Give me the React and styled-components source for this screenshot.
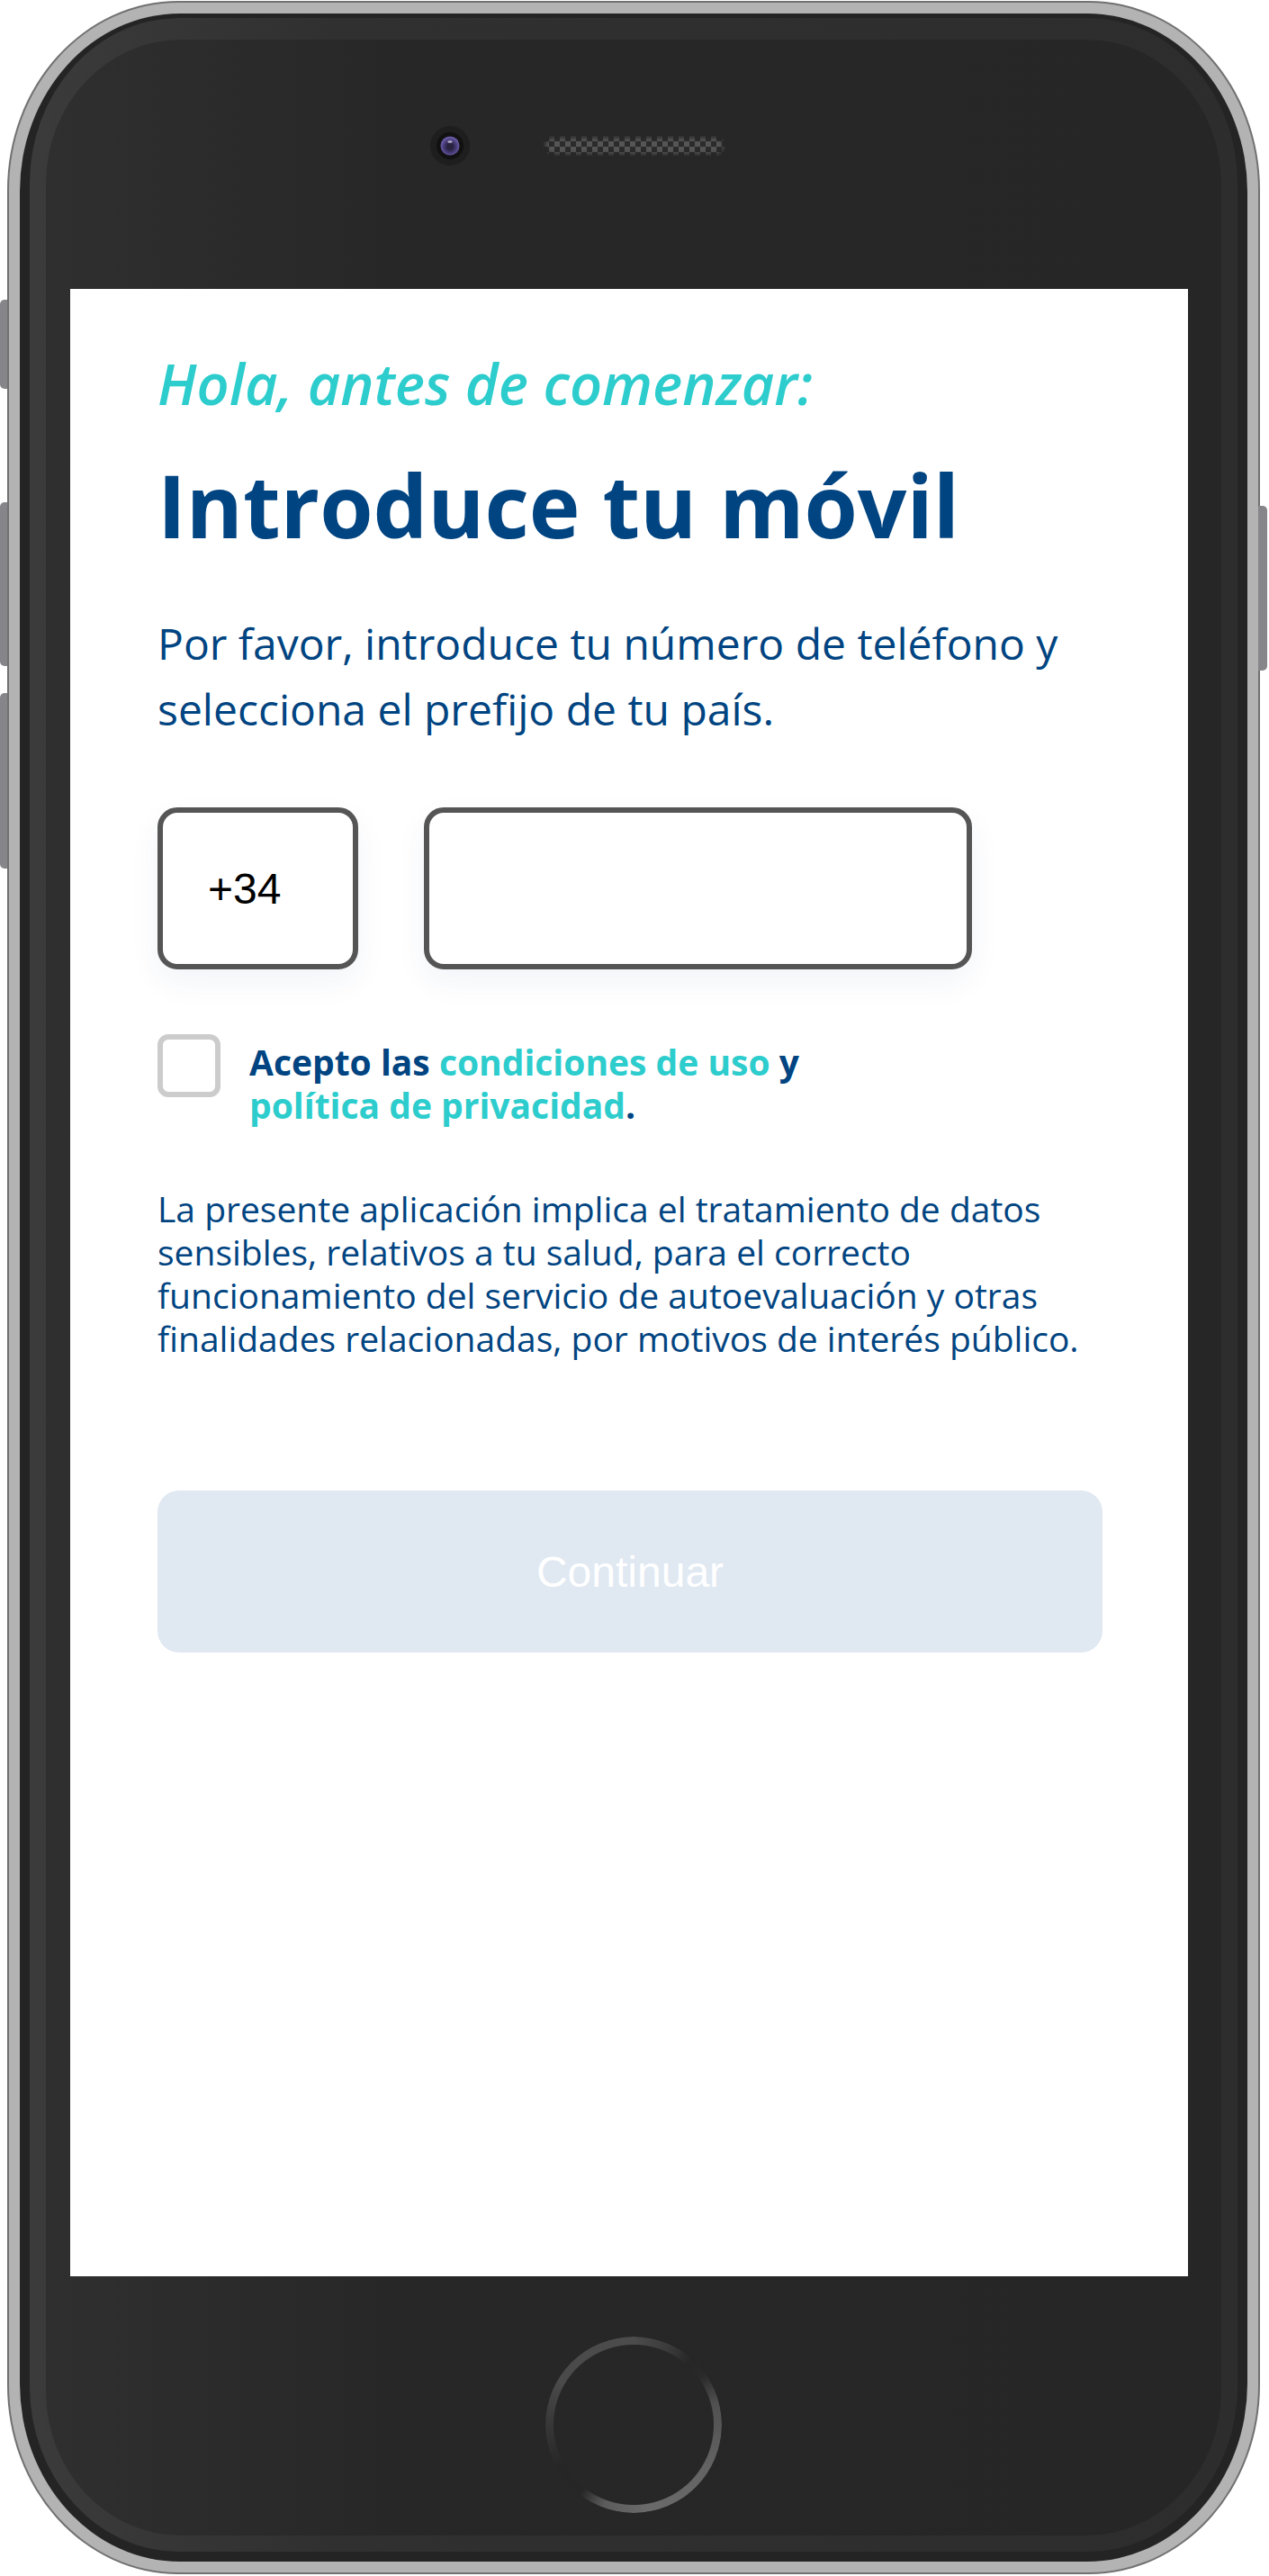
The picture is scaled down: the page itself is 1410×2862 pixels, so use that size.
import styled, { createGlobalStyle } from "styled-components";

const GlobalStyle = createGlobalStyle`
  * { box-sizing: border-box; }
  body {
    margin: 0;
    background: #ffffff;
    font-family: "Open Sans", "Noto Sans", sans-serif;
  }
`;

const navy = "#004481";
const aqua = "#2dcccd";

const App = () => {
  return (
    <>
      <GlobalStyle />
      <Device>
        <KeyColumn side="left">
          <Key gap={333} size={99} side="left" />
          <Key gap={126} size={182} side="left" />
          <Key gap={30} size={195} side="left" />
        </KeyColumn>

        <Shell>
          <Bezel>
            <Rim>
              <Face>
                <TopBar>
                  <Camera viewBox="0 0 44 44" width="44" height="44">
                    <defs>
                      <radialGradient id="lens" cx="50%" cy="55%" r="50%">
                        <stop offset="0%" stopColor="#241d3a" />
                        <stop offset="55%" stopColor="#3d3266" />
                        <stop offset="100%" stopColor="#6a5aa6" />
                      </radialGradient>
                    </defs>
                    <circle cx="22" cy="22" r="22" fill="#1e1e1e" />
                    <circle cx="22" cy="22" r="15" fill="#111111" />
                    <circle cx="22" cy="22" r="10.5" fill="url(#lens)" />
                    <circle cx="22" cy="23" r="4" fill="#2a2340" />
                    <ellipse cx="22" cy="17.5" rx="2.6" ry="1.2" fill="#d8d4e6" opacity="0.8" />
                  </Camera>
                  <Speaker />
                </TopBar>

                <Screen>
                  <Greeting>Hola, antes de comenzar:</Greeting>
                  <Title>Introduce tu móvil</Title>
                  <Lead>
                    Por favor, introduce tu número de teléfono y selecciona el
                    prefijo de tu país.
                  </Lead>

                  <PhoneRow>
                    <PrefixBox type="button">+34</PrefixBox>
                    <NumberInput type="tel" aria-label="Número de teléfono" />
                  </PhoneRow>

                  <ConsentRow>
                    <CheckBox type="button" aria-label="Acepto" />
                    <ConsentText>
                      Acepto las <Link>condiciones de uso</Link> y{" "}
                      <Link>política de privacidad</Link>.
                    </ConsentText>
                  </ConsentRow>

                  <Notice>
                    La presente aplicación implica el tratamiento de datos
                    sensibles, relativos a tu salud, para el correcto
                    funcionamiento del servicio de autoevaluación y otras
                    finalidades relacionadas, por motivos de interés público.
                  </Notice>

                  <ContinueButton type="button" disabled>
                    Continuar
                  </ContinueButton>
                </Screen>

                <BottomBar>
                  <HomeButton />
                </BottomBar>
              </Face>
            </Rim>
          </Bezel>
        </Shell>

        <KeyColumn side="right">
          <Key gap={562} size={183} side="right" />
        </KeyColumn>
      </Device>
    </>
  );
};

export default App;

const Device = styled.div`
  display: flex;
  align-items: flex-start;
  width: 1410px;
  height: 2862px;
`;

const KeyColumn = styled.div`
  display: flex;
  flex-direction: column;
  width: ${(props) => (props.side === "left" ? 8 : 10)}px;
  margin-left: ${(props) => (props.side === "right" ? -2 : 0)}px;
`;

const Key = styled.div`
  margin-top: ${(props) => props.gap}px;
  height: ${(props) => props.size}px;
  background: #86858a;
  border-radius: ${(props) =>
    props.side === "left" ? "5px 0 0 5px" : "0 5px 5px 0"};
`;

const Shell = styled.div`
  margin-top: 1px;
  width: 1392px;
  height: 2859px;
  padding: 12px;
  border: 2px solid #717171;
  background: #b3b3b3;
  border-radius: 190px / 210px;
`;

const Bezel = styled.div`
  height: 100%;
  padding: 5px 11px 11px;
  background: #242424;
  border-radius: 178px / 198px;
`;

const Rim = styled.div`
  height: 100%;
  padding: 24px 18px 18px;
  background: linear-gradient(90deg, #3b3b3b 0%, #303030 25%, #2d2d2d 100%);
  border-radius: 166px / 184px;
`;

const Face = styled.div`
  display: flex;
  flex-direction: column;
  height: 100%;
  padding: 0 37px 0 27px;
  background: linear-gradient(90deg, #2f2f2f 0%, #272727 30%, #262626 100%);
  border-radius: 150px / 160px;
`;

const TopBar = styled.div`
  display: flex;
  align-items: center;
  gap: 82px;
  height: 277px;
  padding: 96px 0 0 400px;
  align-content: flex-start;
  flex-wrap: wrap;
`;

const Camera = styled.svg`
  display: block;
  flex: none;
`;

const Speaker = styled.div`
  width: 202px;
  height: 22px;
  border-radius: 11px;
  background: repeating-conic-gradient(#555555 0 25%, #2b2b2b 0 50%) 0 0 / 12px
    12px;
  box-shadow: inset 0 0 4px 2px #262626;
`;

const Screen = styled.main`
  display: flex;
  flex-direction: column;
  align-items: flex-start;
  height: 2208px;
  padding: 69px 95px 0 97px;
  background: #ffffff;
`;

const Greeting = styled.p`
  margin: 0;
  font-size: 63px;
  line-height: 72px;
  font-style: italic;
  font-weight: 600;
  color: ${aqua};
`;

const Title = styled.h1`
  margin: 41px 0 0;
  font-size: 96px;
  line-height: 115px;
  font-weight: 700;
  color: ${navy};
`;

const Lead = styled.p`
  margin: 60px 0 0;
  font-size: 48px;
  line-height: 73px;
  font-weight: 400;
  color: ${navy};
`;

const PhoneRow = styled.div`
  display: flex;
  gap: 73px;
  margin-top: 73px;
`;

const fieldBox = `
  height: 180px;
  border: 6px solid #555555;
  border-radius: 22px;
  background: #ffffff;
  box-shadow: 0 14px 34px rgba(0, 68, 129, 0.06);
`;

const PrefixBox = styled.button`
  ${fieldBox};
  display: flex;
  align-items: center;
  width: 223px;
  padding: 0 0 0 50px;
  font-family: "Liberation Sans", Arial, sans-serif;
  font-size: 48px;
  color: #000000;
  cursor: pointer;
`;

const NumberInput = styled.input`
  ${fieldBox};
  width: 609px;
  padding: 0 40px;
  font-family: "Liberation Sans", Arial, sans-serif;
  font-size: 48px;
  color: #000000;
  outline: none;
`;

const ConsentRow = styled.div`
  display: flex;
  align-items: flex-start;
  gap: 32px;
  margin-top: 72px;
`;

const CheckBox = styled.button`
  flex: none;
  width: 70px;
  height: 70px;
  padding: 0;
  border: 6px solid #cccccc;
  border-radius: 12px;
  background: #ffffff;
  cursor: pointer;
`;

const ConsentText = styled.p`
  max-width: 650px;
  margin: 0;
  padding-top: 7px;
  font-size: 39px;
  line-height: 48px;
  font-weight: 700;
  color: ${navy};
`;

const Link = styled.span`
  color: ${aqua};
`;

const Notice = styled.p`
  margin: 67px 0 0;
  font-size: 39px;
  line-height: 48px;
  font-weight: 400;
  color: ${navy};
`;

const ContinueButton = styled.button`
  align-self: stretch;
  height: 180px;
  margin-top: 145px;
  border: none;
  border-radius: 24px;
  background: #e0e8f2;
  font-family: "Liberation Sans", Arial, sans-serif;
  font-size: 48px;
  color: #ffffff;
`;

const BottomBar = styled.div`
  display: flex;
  justify-content: center;
  flex: 1;
  padding: 67px 0 0 10px;
`;

const HomeButton = styled.div`
  width: 196px;
  height: 196px;
  border-radius: 50%;
  background: conic-gradient(
    #4c4c4c 0deg,
    #3a3a3a 25deg,
    #262626 42deg,
    #2a2a2a 55deg,
    #505050 75deg,
    #636363 120deg,
    #6a6a6a 170deg,
    #5c5c5c 200deg,
    #262626 218deg,
    #262626 240deg,
    #343434 265deg,
    #4a4a4a 300deg,
    #4c4c4c 360deg
  );
  -webkit-mask: radial-gradient(circle, transparent 88.5px, #000 89.5px);
  mask: radial-gradient(circle, transparent 88.5px, #000 89.5px);
`;
